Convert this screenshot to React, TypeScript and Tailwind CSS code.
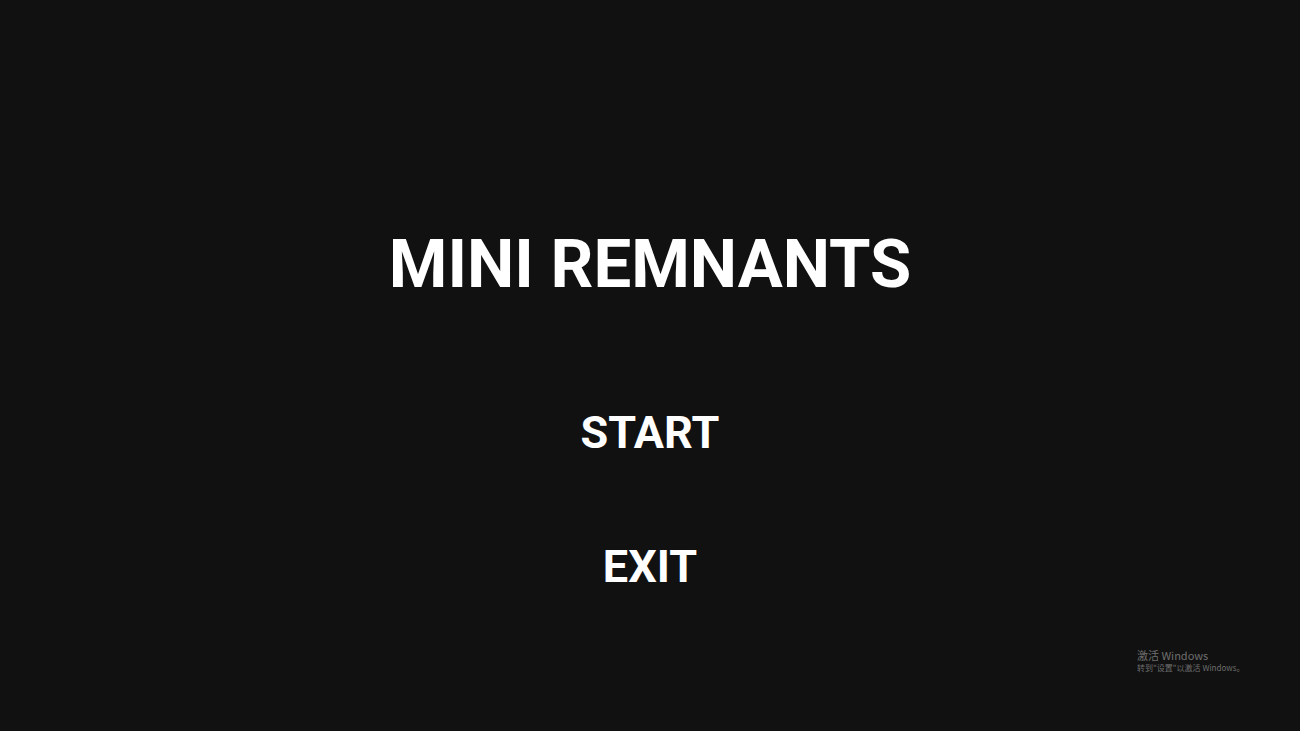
import React from "react";

const menuItems = ["START", "EXIT"];

export default function App() {
  return (
    <div
      className="relative h-[731px] w-full overflow-hidden bg-[#111111] text-white"
      style={{ fontFamily: "Roboto, 'Noto Sans', sans-serif" }}
    >
      <div className="flex flex-col items-center pt-[231px]">
        <h1 className="text-[67px] font-bold leading-none">MINI REMNANTS</h1>

        <div className="mt-[112px] flex flex-col items-center gap-[89px]">
          {menuItems.map((item) => (
            <button
              key={item}
              className="text-[45px] font-bold leading-none text-white"
            >
              {item}
            </button>
          ))}
        </div>
      </div>

      {/* activation watermark */}
      <div
        className="absolute left-[1137px] top-[648px] text-[#6e6e6e]"
        style={{ fontFamily: "'Noto Sans CJK SC', 'Noto Sans', sans-serif" }}
      >
        <div className="text-[11px] leading-[14px]">激活 Windows</div>
        <div className="text-[8px] leading-[12px]">转到"设置"以激活 Windows。</div>
      </div>
    </div>
  );
}
